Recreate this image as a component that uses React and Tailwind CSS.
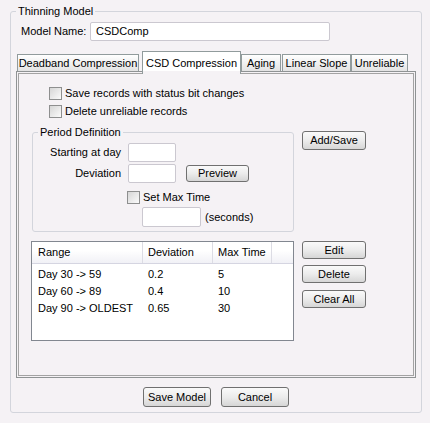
import React from "react";

const Check = () => (
  <span className="inline-block w-[13px] h-[13px] shrink-0 border border-[#8e8f8f] bg-linear-to-br from-[#d6d6d6] to-[#fbfbfb]" />
);

const Btn = ({ children, className = "" }) => (
  <button
    className={`flex items-center justify-center border border-[#707070] rounded-[3px] bg-linear-to-b from-[#fafafa] via-[#ececec] to-[#d6d6d6] text-black leading-none ${className}`}
  >
    {children}
  </button>
);

const Field = ({ className = "", value = "" }) => (
  <div className={`bg-white border border-[#cbc8d0] rounded-[2px] flex items-center pl-[5px] ${className}`}>
    {value}
  </div>
);

const rows = [
  ["Day 30 -> 59", "0.2", "5"],
  ["Day 60 -> 89", "0.4", "10"],
  ["Day 90 -> OLDEST", "0.65", "30"],
];

export default function App() {
  return (
    <div
      className="w-[430px] h-[423px] bg-[#f5f2f5] pt-[5px] text-[11px] text-black"
      style={{ fontFamily: '"Liberation Sans", Arial, sans-serif' }}
    >
      <fieldset className="ml-[10px] w-[411px] border border-[#d3d5dc] rounded-[3px] px-[5px] pb-[5px]">
        <legend className="px-[2px] leading-[13px]">Thinning Model</legend>

        {/* model name */}
        <div className="flex items-center mt-[4px] pl-[5px]">
          <span className="w-[69px]">Model Name:</span>
          <Field className="w-[240px] h-[19px]" value="CSDComp" />
        </div>

        {/* tabs */}
        <div className="relative z-10 flex items-end h-[23px] mt-[10px]">
          <div className="ml-[1px] mb-[3px] w-[122px] h-[17px] flex items-center justify-center border border-b-0 border-[#919b9c] bg-linear-to-b from-white to-[#e3e3e3] whitespace-nowrap">
            Deadband Compression
          </div>
          <div className="ml-[3px] w-[99px] h-[23px] flex items-start pt-[3px] justify-center border border-b-0 border-[#919b9c] bg-white shadow-[inset_0_-3px_0_#f5f2f5] whitespace-nowrap">
            CSD Compression
          </div>
          <div className="mb-[3px] w-[40px] h-[17px] flex items-center justify-center border border-b-0 border-[#919b9c] bg-linear-to-b from-white to-[#e3e3e3]">
            Aging
          </div>
          <div className="ml-[1px] mb-[3px] w-[69px] h-[17px] flex items-center justify-center border border-b-0 border-[#919b9c] bg-linear-to-b from-white to-[#e3e3e3] whitespace-nowrap">
            Linear Slope
          </div>
          <div className="mb-[3px] w-[57px] h-[17px] flex items-center justify-center border border-b-0 border-[#919b9c] bg-linear-to-b from-white to-[#e3e3e3]">
            Unreliable
          </div>
        </div>

        {/* tab panel */}
        <div className="-mt-[3px] w-[400px] h-[307px] border border-[#8f9394] p-[1px] flex">
          <div className="flex-1 border border-[#a3a3a3] pl-[12px] pt-[11px]">
            <div className="ml-[18px] flex flex-col gap-[2px]">
              <label className="flex items-center h-[16px]">
                <Check />
                <span className="ml-[3px]">Save records with status bit changes</span>
              </label>
              <label className="flex items-center h-[16px]">
                <Check />
                <span className="ml-[3px]">Delete unreliable records</span>
              </label>
            </div>

            <div className="flex items-start mt-[7px]">
              <fieldset className="ml-[1px] w-[262px] border border-[#d3d5dc] rounded-[3px] px-[5px] pb-[4px]">
                <legend className="px-[2px] leading-[13px]">Period Definition</legend>
                <div className="flex items-center mt-[4px]">
                  <span className="w-[83px] text-right">Starting at day</span>
                  <Field className="ml-[7px] w-[48px] h-[19px]" />
                </div>
                <div className="flex items-center mt-[2px]">
                  <span className="w-[83px] text-right">Deviation</span>
                  <Field className="ml-[7px] w-[48px] h-[19px]" />
                  <Btn className="ml-[10px] w-[63px] h-[17px]">Preview</Btn>
                </div>
                <label className="flex items-center mt-[8px] ml-[89px] h-[13px]">
                  <Check />
                  <span className="ml-[3px]">Set Max Time</span>
                </label>
                <div className="flex items-center mt-[3px] ml-[104px]">
                  <Field className="w-[59px] h-[20px]" />
                  <span className="ml-[4px]">(seconds)</span>
                </div>
              </fieldset>
              <Btn className="ml-[8px] mt-[5px] w-[64px] h-[19px]">Add/Save</Btn>
            </div>

            <div className="flex items-start mt-[9px]">
              <div className="w-[263px] h-[100px] border border-[#828790] bg-white">
                <div className="flex h-[22px] bg-linear-to-b from-white from-40% to-[#f1f1f6] border-b border-[#d5d5e1]">
                  <div className="w-[111px] pl-[6px] flex items-center border-r border-[#dcdce4]">Range</div>
                  <div className="w-[70px] pl-[5px] flex items-center border-r border-[#dcdce4]">Deviation</div>
                  <div className="w-[59px] pl-[5px] flex items-center border-r border-[#dcdce4]">Max Time</div>
                  <div className="flex-1" />
                </div>
                <div className="pt-[2px]">
                  {rows.map((r) => (
                    <div key={r[0]} className="flex h-[17px] items-center">
                      <div className="w-[111px] pl-[6px]">{r[0]}</div>
                      <div className="w-[70px] pl-[5px]">{r[1]}</div>
                      <div className="w-[59px] pl-[5px]">{r[2]}</div>
                    </div>
                  ))}
                </div>
              </div>
              <div className="ml-[8px] flex flex-col">
                <Btn className="w-[64px] h-[18px]">Edit</Btn>
                <Btn className="mt-[6px] w-[64px] h-[18px]">Delete</Btn>
                <Btn className="mt-[7px] w-[64px] h-[18px]">Clear All</Btn>
              </div>
            </div>
          </div>
        </div>

        {/* bottom buttons */}
        <div className="flex justify-center gap-[10px] mt-[9px]">
          <Btn className="w-[68px] h-[20px]">Save Model</Btn>
          <Btn className="w-[68px] h-[20px]">Cancel</Btn>
        </div>
      </fieldset>
    </div>
  );
}
